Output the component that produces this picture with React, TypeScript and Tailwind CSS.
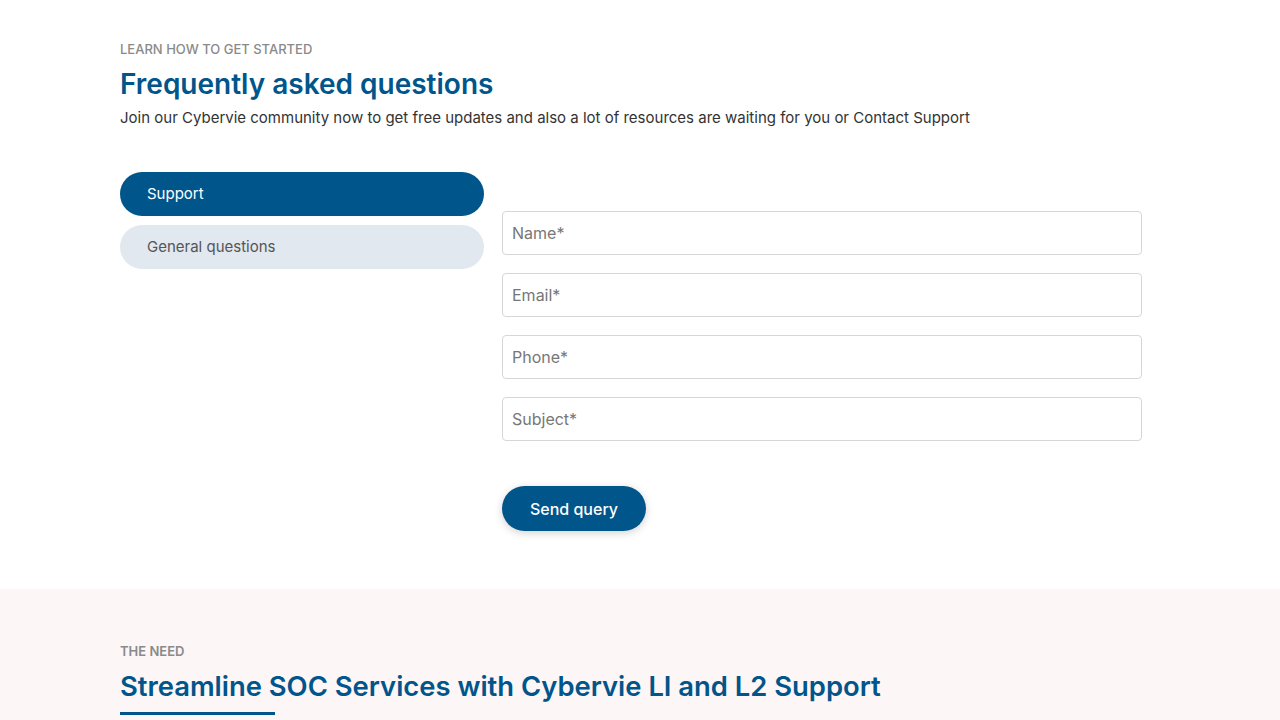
import { useState } from "react";

const fields = ["Name*", "Email*", "Phone*", "Subject*"];

export default function App() {
  const [tab, setTab] = useState("support");

  return (
    <div className="min-h-screen bg-white font-['Inter',sans-serif]">
      {/* FAQ / contact */}
      <section className="px-[120px] pt-[40px] pb-[58px]">
        <p className="text-[13px] font-medium uppercase text-[#8a8a8a]">Learn how to get started</p>
        <h1 className="mt-[6px] text-[28px] font-semibold leading-[36px] text-[#00558b]">
          Frequently asked questions
        </h1>
        <p className="mt-[5px] text-[15px] text-[#333]">
          Join our Cybervie community now to get free updates and also a lot of resources are waiting for you or Contact Support
        </p>

        <div className="mt-[43px] flex gap-[18px]">
          <div className="flex w-[364px] flex-col gap-[9px]">
            <button
              onClick={() => setTab("support")}
              className={`h-[44px] rounded-full px-[27px] text-left text-[15px] ${
                tab === "support" ? "bg-[#00558b] text-white" : "bg-[#e1e8ef] text-[#555]"
              }`}
            >
              Support
            </button>
            <button
              onClick={() => setTab("general")}
              className={`h-[44px] rounded-full px-[27px] text-left text-[15px] ${
                tab === "general" ? "bg-[#00558b] text-white" : "bg-[#e1e8ef] text-[#555]"
              }`}
            >
              General questions
            </button>
          </div>

          <form className="mt-[39px] flex w-[640px] flex-col" onSubmit={(e) => e.preventDefault()}>
            <div className="flex flex-col gap-[18px]">
              {fields.map((f) => (
                <input
                  key={f}
                  placeholder={f}
                  className="h-[44px] rounded-[4px] border border-[#d6d6d6] px-[9px] text-[16px] text-[#333] placeholder:text-[#777] focus:outline-none"
                />
              ))}
            </div>
            <button
              type="submit"
              className="mt-[45px] h-[45px] w-[144px] rounded-full bg-[#00558b] text-[16px] font-medium text-white shadow-[0_2px_8px_rgba(0,0,0,0.18)]"
            >
              Send query
            </button>
          </form>
        </div>
      </section>

      {/* The need */}
      <section className="bg-[#fcf6f6] px-[120px] pt-[53px] pb-[40px]">
        <p className="text-[13px] font-semibold uppercase text-[#8a8a8a]">The need</p>
        <h2 className="mt-[6px] text-[27.4px] font-semibold leading-[36px] text-[#00558b]">
          Streamline SOC Services with Cybervie LI and L2 Support
        </h2>
        <div className="mt-[8px] h-[3px] w-[155px] bg-[#00558b]" />
      </section>
    </div>
  );
}
